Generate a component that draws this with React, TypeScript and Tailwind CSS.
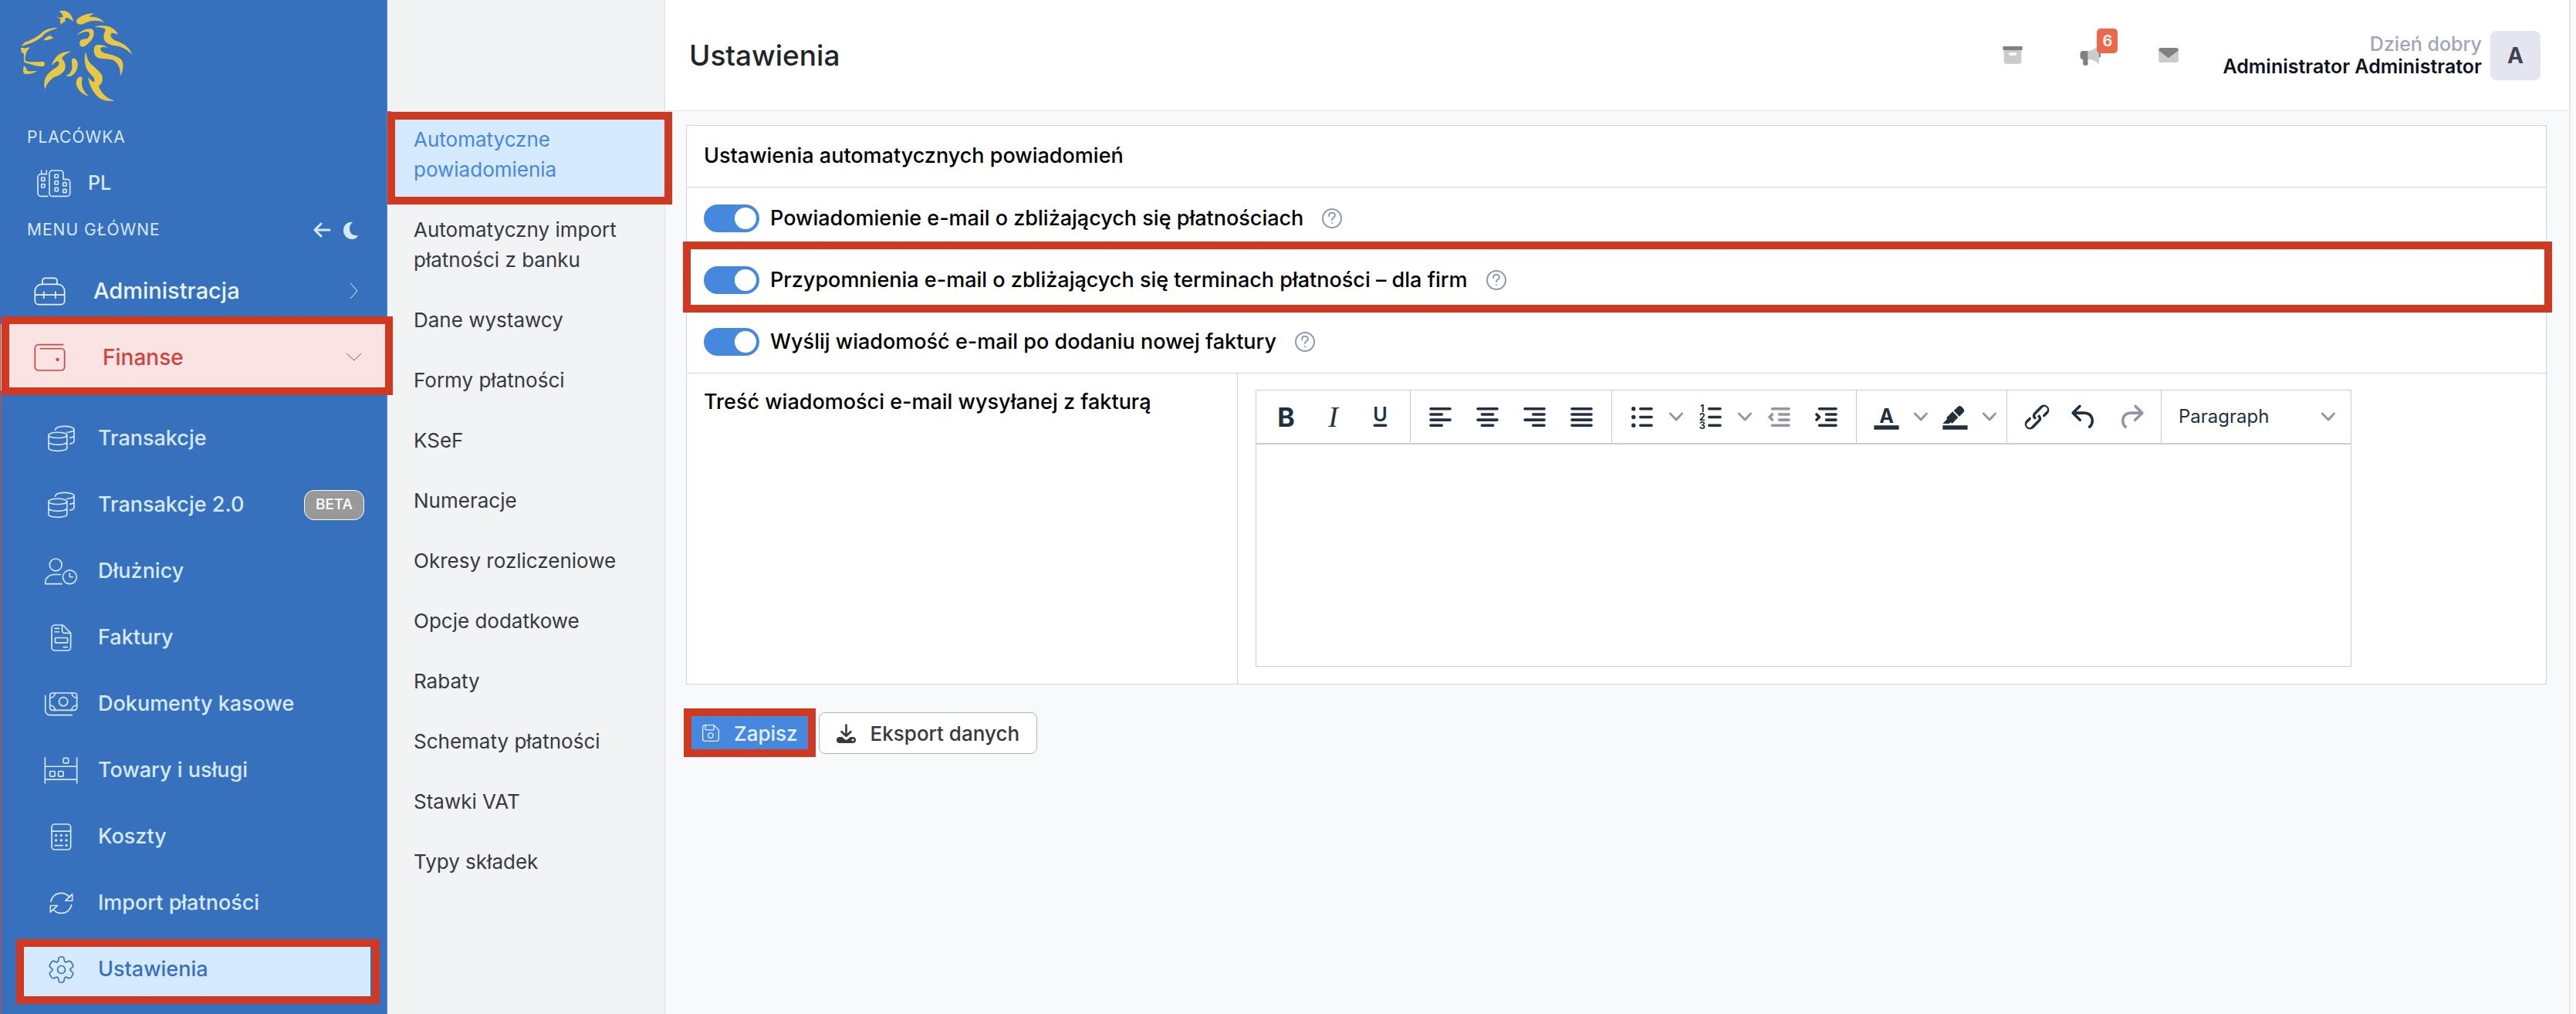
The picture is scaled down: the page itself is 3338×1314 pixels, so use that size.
import React from 'react';

type IconProps = { w: number; h: number; stroke?: number; children: React.ReactNode };

/* Outline icons are drawn on a grid three times finer than their display size. */
function Outline({ w, h, stroke = 5, children }: IconProps) {
  return (
    <svg
      width={Math.round(w / 3)}
      height={Math.round(h / 3)}
      viewBox={`0 0 ${w} ${h}`}
      fill="none"
      stroke="currentColor"
      strokeWidth={stroke}
      strokeLinecap="round"
      strokeLinejoin="round"
      aria-hidden="true"
      className="shrink-0"
    >
      {children}
    </svg>
  );
}

const Buildings = () => (
  <Outline w={132} h={108}>
    <path d="M42 103H15A12 12 0 0 1 3 91V29a12 12 0 0 1 12-12H37V3M17 3v14" />
    <rect x="17" y="30" width="13" height="13" rx="2" />
    <rect x="17" y="56" width="13" height="13" rx="2" />
    <path d="M102 37V14A11 11 0 0 0 91 3H59A11 11 0 0 0 48 14V92a11 11 0 0 0 11 11h58a11 11 0 0 0 11-11V48a11 11 0 0 0-11-11z" />
    <rect x="69" y="18" width="13" height="13" rx="2" />
    <rect x="69" y="44" width="13" height="13" rx="2" />
    <rect x="69" y="70" width="13" height="13" rx="2" />
    <rect x="101" y="50" width="13" height="13" rx="2" />
    <rect x="101" y="76" width="13" height="13" rx="2" />
  </Outline>
);

const Toolbox = () => (
  <Outline w={122} h={110}>
    <path d="M33 28V14A10 10 0 0 1 43 4h36a10 10 0 0 1 10 10V28" />
    <path d="M28 28h64a26 26 0 0 1 26 26V92a14 14 0 0 1-14 14H18A14 14 0 0 1 4 92V54A26 26 0 0 1 28 28zM4 69H118M38 57v24M83 57v24" />
  </Outline>
);

const Wallet = () => (
  <Outline w={122} h={110}>
    <path d="M112 5H18A14 14 0 0 0 4 19V91a13 13 0 0 0 13 13H105a13 13 0 0 0 13-13V33a13 13 0 0 0-13-13H25" />
    <circle cx="91" cy="62" r="4" fill="currentColor" />
  </Outline>
);

const Coins = () => (
  <Outline w={106} h={104}>
    <ellipse cx="39" cy="38" rx="36" ry="11" />
    <path d="M3 38v51c0 6 16 11 36 11s36-5 36-11V38M3 64c0 7 16 12 36 12s36-5 36-12" />
    <path d="M29 18C29 8 48 3 66 3s37 5 37 12-12 11-28 12M103 15v46c0 6-6 9-16 11M103 38c0 5-6 8-16 10" />
  </Outline>
);

const UserClock = () => (
  <Outline w={131} h={106}>
    <circle cx="45" cy="27" r="24" />
    <path d="M69 102H4C2 80 18 65 40 65h24" />
    <circle cx="100" cy="75" r="27" />
    <path d="M100 61v14h12" />
  </Outline>
);

const Invoice = () => (
  <Outline w={80} h={104}>
    <path d="M3 15A12 12 0 0 1 15 3h31l30 31v55a12 12 0 0 1-12 12H15A12 12 0 0 1 3 89z" />
    <path d="M43 4v20a10 10 0 0 0 10 10h22M15 16h16M15 29h16M48 88h15" />
    <rect x="16" y="52" width="48" height="19" rx="2" />
  </Outline>
);

const Banknotes = () => (
  <Outline w={131} h={94}>
    <rect x="22" y="3" width="106" height="68" rx="10" />
    <circle cx="75" cy="37" r="17" />
    <path d="M22 22c12 0 20-8 20-19M128 22c-12 0-20-8-20-19M22 52c12 0 20 8 20 19M128 52c-12 0-20 8-20 19M4 14v58a18 18 0 0 0 18 18h87" />
  </Outline>
);

const Shelf = () => (
  <Outline w={131} h={106}>
    <path d="M3 3v100M128 3v100M3 37h125M3 88h125" />
    <rect x="75" y="4" width="20" height="20" rx="4" />
    <rect x="22" y="56" width="20" height="20" rx="4" />
    <rect x="55" y="56" width="20" height="20" rx="4" />
  </Outline>
);

const Calculator = () => (
  <Outline w={80} h={104}>
    <rect x="3" y="3" width="73" height="98" rx="12" />
    <path d="M3 30h73M15 85h30" />
    <path strokeWidth="9" d="M19 46h1M39 46h1M59 46h1M19 65h1M39 65h1M59 65h1M59 85h1" />
  </Outline>
);

const Refresh = () => (
  <Outline w={94} h={86}>
    <path d="M6 36C9 17 26 3 46 3c14 0 26 7 34 17M90 7v26H63zM87 49C84 68 67 82 47 82 33 82 23 77 15 67M4 78V52h28z" />
  </Outline>
);

const Gear = () => (
  <Outline w={98} h={106}>
    <path d="M45 3H53Q58 3 59 8L61 18Q62 22 66 24L77 20Q84 18 88 24L94 34Q97 40 92 44L84 51V56L92 63Q97 67 94 72L88 83Q84 88 77 86L66 82Q62 84 61 88L59 98Q58 103 53 103H45Q40 103 39 98L37 88Q36 84 32 82L21 86Q14 88 10 83L4 72Q1 67 6 63L14 56V51L6 44Q1 40 4 34L10 24Q14 18 21 20L32 24Q36 22 37 18L39 8Q40 3 45 3Z" />
    <circle cx="49" cy="53" r="15" />
  </Outline>
);

const Lion = () => (
  <svg width="144" height="117" viewBox="81 42 432 351" fill="#e8c745" role="img" aria-label="Logo">
    <path d="M232 42H252C268 46 283 62 285 84 278 76 268 70 258 68L252 74 254 84 246 86 236 97C236 90 234 84 233 80 242 74 228 70 216 67 226 68 240 70 245 66 244 56 238 50 232 46Z" />
    <path d="M300 74C318 58 345 50 368 53 360 55 352 58 346 66 370 62 395 72 405 88 385 78 355 78 335 88 320 98 302 97 298 88 296 82 297 78 300 74Z" />
    <path d="M225 108C200 106 180 114 168 122 155 136 125 155 100 163 90 168 86 176 84 181 90 176 100 174 112 170 135 164 155 150 166 140 178 124 200 118 225 108Z" />
    <path d="M170 157C176 146 186 138 200 139 196 143 204 147 211 147 200 151 184 158 170 157Z" />
    <path d="M81 186H92C100 190 108 183 116 184 112 192 108 195 104 200 98 215 96 226 98 236 118 244 140 240 168 239 176 243 176 255 168 258 150 260 125 252 108 246 100 245 94 244 93 238 92 225 94 214 92 208 84 206 80 196 81 186Z" />
    <path d="M92 258C98 258 104 262 104 274 112 280 128 276 144 276 130 286 110 290 96 287 88 282 90 268 92 258Z" />
    <path d="M276 201C250 198 225 210 212 230 204 242 202 250 201 256 208 248 214 242 222 238 232 240 232 250 224 258 205 272 185 282 176 305 170 320 172 335 175 347 182 325 195 308 215 298 240 290 256 275 254 255 253 240 244 232 240 226 248 214 262 206 276 201Z" />
    <path d="M281 228C290 223 298 230 302 245 304 270 290 292 272 297 266 298 260 296 256 294 268 292 278 280 280 265 281 250 276 238 281 228Z" />
    <path d="M316 298C304 296 296 308 296 325 298 345 320 370 346 374 330 362 320 345 318 328 316 315 324 305 316 298Z" />
    <path d="M298 137C315 118 340 108 358 113 370 120 366 145 352 160 340 172 332 182 320 182 308 180 306 165 314 156 322 150 336 154 342 148 350 138 350 128 343 124 330 120 312 128 298 137Z" />
    <path d="M368 104C390 98 415 98 430 106 445 114 455 124 459 134 450 130 440 128 434 128 424 140 436 152 450 158 480 168 508 185 513 214 500 195 475 182 450 178 425 176 402 165 403 140 404 128 412 120 408 112 398 106 382 106 368 104Z" />
    <path d="M420 186C410 178 385 170 372 176 362 184 362 210 376 222 392 232 420 226 440 234 462 246 470 270 467 297 478 280 484 250 472 232 455 216 425 210 405 206 390 200 386 188 396 184 404 182 412 184 420 186Z" />
    <path d="M333 202C325 225 330 262 345 280 358 296 372 306 366 318 358 318 348 308 343 300 345 325 360 360 385 380 405 394 430 394 446 391 420 386 395 368 383 334 396 328 402 310 396 292 385 272 360 258 346 240 338 226 336 214 333 202Z" />
  </svg>
);

const Frame = ({ className }: { className: string }) => (
  <span aria-hidden="true" className={`pointer-events-none absolute border-10 border-[#d13820] ${className}`} />
);

const financeLinks: { label: string; icon: React.ReactNode; beta?: boolean; active?: boolean }[] = [
  { label: 'Transakcje', icon: <Coins /> },
  { label: 'Transakcje 2.0', icon: <Coins />, beta: true },
  { label: 'Dłużnicy', icon: <UserClock /> },
  { label: 'Faktury', icon: <Invoice /> },
  { label: 'Dokumenty kasowe', icon: <Banknotes /> },
  { label: 'Towary i usługi', icon: <Shelf /> },
  { label: 'Koszty', icon: <Calculator /> },
  { label: 'Import płatności', icon: <Refresh /> },
  { label: 'Ustawienia', icon: <Gear />, active: true },
];

function Sidebar() {
  return (
    <aside className="flex w-[502px] shrink-0 flex-col border-r border-[#4588de] bg-[#3770bd] text-[#d5e9ff]">
      <a href="#" className="mt-[14px] ml-[27px] w-36">
        <Lion />
      </a>
      <p className="mt-[35px] pl-[35px] text-[21px] leading-6 tracking-[1px]">PLACÓWKA</p>
      <button className="mt-[26px] flex h-11 items-center gap-[22px] pl-12 text-left text-[25px] font-medium">
        <Buildings />
        PL
      </button>
      <div className="mt-[26px] flex h-6 items-center pr-9 pl-[35px]">
        <p className="flex-1 text-[21px] leading-6 tracking-[1px]">MENU GŁÓWNE</p>
        <button aria-label="Zwiń menu" className="mr-4">
          <svg width="23" height="20" viewBox="0 0 23 20" fill="none" stroke="currentColor" strokeWidth="3" strokeLinecap="round" strokeLinejoin="round">
            <path d="M21 10H2M10 2L2 10l8 8" />
          </svg>
        </button>
        <button aria-label="Tryb ciemny">
          <svg width="20" height="23" viewBox="0 0 20 23" fill="currentColor">
            <path d="M12 1C6 0 0 4 0 12c0 6 5 11 11 11 4 0 7-2 8-5-6 1-11-2-11-9 0-3 1-6 4-8z" />
          </svg>
        </button>
      </div>
      <nav className="mt-6 flex flex-1 flex-col">
        <a href="#" className="flex h-[86px] items-center pr-[37px] pl-11 text-[29px] font-medium text-[#eaf4ff]">
          <Toolbox />
          <span className="ml-9 flex-1">Administracja</span>
          <svg width="11" height="22" viewBox="0 0 11 22" fill="none" stroke="currentColor" strokeWidth="1">
            <path d="M1 1l9 10-9 10" />
          </svg>
        </a>
        <div className="flex-1 border-l border-[#d8403a]">
          <a href="#" className="relative flex h-[86px] items-center bg-[#fae4e3] pr-8 pl-[43px] text-[28px] font-medium text-[#d2433c]">
            <Wallet />
            <span className="ml-12 flex-1">Finanse</span>
            <svg width="21" height="12" viewBox="0 0 21 12" fill="none" stroke="currentColor" strokeWidth="1">
              <path d="M1 1l10 9 9-9" />
            </svg>
            <Frame className="-top-[10px] -right-2 -bottom-[6px] left-px z-10" />
          </a>
          <ul className="mt-[19px] mb-[15px]">
            {financeLinks.map(({ label, icon, beta, active }) => (
              <li key={label} className="relative">
                {active && (
                  <>
                    <span className="absolute top-[10px] right-[21px] bottom-2 left-[30px] bg-[#d5e9ff]" />
                    <Frame className="top-1 right-[9px] -bottom-[2px] left-5" />
                  </>
                )}
                <a href="#" className={`relative flex h-[86px] items-center pr-[29px] text-[27px] font-medium ${active ? 'text-[#3770bd]' : ''}`}>
                  <span className="ml-14 flex w-11 justify-center">{icon}</span>
                  <span className="ml-[26px] flex-1">{label}</span>
                  {beta && (
                    <span className="flex h-[39px] w-[78px] items-center justify-center rounded-[13px] border border-white bg-[#999] text-[19px] text-white">
                      BETA
                    </span>
                  )}
                </a>
              </li>
            ))}
          </ul>
        </div>
      </nav>
    </aside>
  );
}

const sections = [
  'Automatyczne powiadomienia',
  'Automatyczny import płatności z banku',
  'Dane wystawcy',
  'Formy płatności',
  'KSeF',
  'Numeracje',
  'Okresy rozliczeniowe',
  'Opcje dodatkowe',
  'Rabaty',
  'Schematy płatności',
  'Stawki VAT',
  'Typy składek',
];

function SectionMenu() {
  return (
    <nav className="w-[360px] shrink-0 border-r border-[#dee2e6] bg-[#f1f3f5] pt-36">
      {sections.map((label, i) => (
        <a
          key={label}
          href="#"
          className={`relative block border-l-5 pt-[17px] pr-9 pb-[22px] pl-[29px] text-[26px] leading-[39px] ${
            i === 0 ? 'border-[#4588de] bg-[#d5e9ff] text-[#4588de]' : 'border-transparent text-[#343a40]'
          }`}
        >
          {label}
          {i === 0 && <Frame className="top-px -right-[10px] -bottom-1 -left-[5px]" />}
        </a>
      ))}
    </nav>
  );
}

function Header() {
  return (
    <header className="flex h-36 items-center border-b border-[#e5e8eb] bg-white pr-[37px] pl-[31px]">
      <h1 className="flex-1 text-[37px] font-medium text-[#212529]">Ustawienia</h1>
      <button aria-label="Archiwum" className="flex w-[101px] justify-center">
        <svg width="26" height="23" viewBox="50 117 76 69">
          <path d="M54 130h68v47a8 8 0 0 1-8 8H62a8 8 0 0 1-8-8z" fill="#cbcbcb" />
          <rect x="50" y="117" width="76" height="15" rx="4" fill="#808080" />
          <rect x="73" y="142" width="30" height="10" rx="3" fill="#fff" />
        </svg>
      </button>
      <button aria-label="Ogłoszenia" className="relative flex w-[101px] justify-center">
        <svg width="27" height="26" viewBox="350 112 80 78">
          <path d="M423 141a8 8 0 0 1 0 16z" fill="#808080" stroke="#808080" strokeWidth="4" />
          <path d="M362 133h20v33h-1v18a5 5 0 0 1-5 5h-9a5 5 0 0 1-5-5v-18a11 11 0 0 1-11-11v-11a11 11 0 0 1 11-11z" fill="#808080" />
          <path d="M381 133C400 132 412 120 424 112V185C412 172 398 165 381 165Z" fill="#cbcbcb" />
        </svg>
        <span className="absolute -top-[22px] left-[59px] flex h-8 w-[27px] items-center justify-center rounded-[5px] bg-[#e9694a] text-xl font-semibold text-white">
          6
        </span>
      </button>
      <button aria-label="Wiadomości" className="flex w-[101px] justify-center">
        <svg width="26" height="19" viewBox="654 123 77 57">
          <rect x="654" y="123" width="77" height="57" rx="8" fill="#cbcbcb" />
          <path d="M654 133a10 10 0 0 1 9-10h59a10 10 0 0 1 9 10L696 160q-4 3-8 0z" fill="#808080" />
        </svg>
      </button>
      <div className="ml-5 text-right text-[25px] leading-[29px]">
        <p className="font-medium text-[#a1a5b7]">Dzień dobry</p>
        <p className="font-semibold text-[#0f1220]">Administrator Administrator</p>
      </div>
      <button className="ml-[11px] flex h-16 w-[65px] items-center justify-center rounded-lg bg-[#e5e5ef] text-[28px] font-bold text-[#3f4254]">
        A
      </button>
    </header>
  );
}

const toggles = [
  { id: 'upcoming', label: 'Powiadomienie e-mail o zbliżających się płatnościach' },
  { id: 'companies', label: 'Przypomnienia e-mail o zbliżających się terminach płatności – dla firm', framed: true },
  { id: 'invoice', label: 'Wyślij wiadomość e-mail po dodaniu nowej faktury' },
];

const Help = () => (
  <button aria-label="Pomoc" className="ml-6 text-[#8d9bab]">
    <svg width="26" height="26" viewBox="0 0 26 26" fill="none" stroke="currentColor" strokeWidth="2" strokeLinecap="round">
      <circle cx="13" cy="13" r="12" />
      <path d="M9 10c0-6 8-5 8-1 0 3-4 3-4 6" />
      <circle cx="13" cy="19" r="1" fill="currentColor" stroke="none" />
    </svg>
  </button>
);

function Tool({ label, muted, children }: { label: string; muted?: boolean; children: React.ReactNode }) {
  return (
    <button aria-label={label} className={`flex h-[61px] w-[61px] items-center justify-center ${muted ? 'text-[#9196a1]' : ''}`}>
      <svg width="43" height="43" viewBox="0 0 24 24" fill="currentColor" fontFamily="Inter, sans-serif">
        {children}
      </svg>
    </button>
  );
}

const Chevron = () => (
  <svg width="18" height="18" viewBox="0 0 10 10" fill="#9196a1" aria-hidden="true">
    <path d="M8.7 2.2c.3-.3.8-.3 1 0 .4.4.4.9 0 1.2L5.7 7.8c-.3.3-.9.3-1.2 0L.2 3.4a.8.8 0 0 1 0-1.2c.3-.3.8-.3 1.1 0L5 6l3.7-3.8Z" />
  </svg>
);

const More = () => (
  <button aria-label="Więcej opcji" className="flex h-[61px] w-7 items-center justify-center">
    <Chevron />
  </button>
);

const Lines = ({ d }: { d: string }) => (
  <path d={d} fill="none" stroke="currentColor" strokeWidth="2" strokeLinecap="round" strokeLinejoin="round" />
);

const Group = ({ children }: { children: React.ReactNode }) => (
  <div className="flex items-center border-r border-[#ccc] px-2">{children}</div>
);

const undoPath =
  'M6.4 8H12c3.7 0 6.2 2 6.8 5.1.6 2.7-.4 5.6-2.3 6.8a1 1 0 0 1-1-1.8c1.1-.6 1.8-2.7 1.4-4.6-.5-2.1-2.1-3.5-4.9-3.5H6.4l3.3 3.3a1 1 0 1 1-1.4 1.4l-5-5a1 1 0 0 1 0-1.4l5-5a1 1 0 0 1 1.4 1.4L6.4 8Z';

function Editor() {
  return (
    <div className="w-full max-w-[1420px] border border-[#ccc] text-[#222f3e]">
      <div className="flex h-[70px] border-b-2 border-[#ccc]">
        <Group>
          <Tool label="Pogrubienie">
            <text x="12" y="19" fontSize="19" fontWeight="700" textAnchor="middle">B</text>
          </Tool>
          <Tool label="Kursywa">
            <text x="12" y="19" fontSize="21" fontStyle="italic" fontFamily="'Liberation Serif', serif" textAnchor="middle">I</text>
          </Tool>
          <Tool label="Podkreślenie">
            <text x="12" y="15" fontSize="14" fontWeight="600" textAnchor="middle">U</text>
            <Lines d="M8 18h8" />
          </Tool>
        </Group>
        <Group>
          <Tool label="Wyrównaj do lewej"><Lines d="M5 6h14M5 10h8M5 14h14M5 18h8" /></Tool>
          <Tool label="Wyśrodkuj"><Lines d="M5 6h14M8 10h8M5 14h14M8 18h8" /></Tool>
          <Tool label="Wyrównaj do prawej"><Lines d="M5 6h14M11 10h8M5 14h14M11 18h8" /></Tool>
          <Tool label="Wyjustuj"><Lines d="M5 6h14M5 10h14M5 14h14M5 18h14" /></Tool>
        </Group>
        <Group>
          <Tool label="Lista punktowana">
            <Lines d="M11 6h8M11 12h8M11 18h8" />
            <circle cx="6" cy="6" r="1.5" /><circle cx="6" cy="12" r="1.5" /><circle cx="6" cy="18" r="1.5" />
          </Tool>
          <More />
          <Tool label="Lista numerowana">
            <Lines d="M11 6h8M11 12h8M11 18h8" />
            <text x="6" y="8.500" fontSize="7" fontWeight="700" textAnchor="middle">1</text>
            <text x="6" y="14.500" fontSize="7" fontWeight="700" textAnchor="middle">2</text>
            <text x="6" y="20.500" fontSize="7" fontWeight="700" textAnchor="middle">3</text>
          </Tool>
          <More />
          <Tool label="Zmniejsz wcięcie" muted><Lines d="M7 6h12M12 10h7M12 14h7M7 18h12M7 10l-2 2 2 2" /></Tool>
          <Tool label="Zwiększ wcięcie"><Lines d="M7 6h12M12 10h7M12 14h7M7 18h12M5 10l2 2-2 2" /></Tool>
        </Group>
        <Group>
          <Tool label="Kolor tekstu">
            <path d="M3 18h18v3H3z" />
            <text x="12" y="16" fontSize="14" fontWeight="700" textAnchor="middle">A</text>
          </Tool>
          <More />
          <Tool label="Kolor tła">
            <path d="M3 18h18v3H3z" />
            <path d="M7.7 16.700H3l3.300-3.300-.7-.8L10.200 8l4 4.100-4 4.200c-.2.2-.6.2-.8 0l-.6-.7-1.100 1.100zm5-7.500L11 7.400l3-2.900a2 2 0 0 1 2.600 0L18 6c.7.7.7 2 0 2.700l-2.900 2.900-1.800-1.800-.5-.6" />
          </Tool>
          <More />
        </Group>
        <Group>
          <Tool label="Odnośnik">
            <path d="M6.2 12.3a1 1 0 0 1 1.4 1.4l-2 2a2 2 0 1 0 2.6 2.8l4.8-4.8a1 1 0 0 0 0-1.4 1 1 0 1 1 1.4-1.3 2.9 2.9 0 0 1 0 4L9.6 20a3.9 3.9 0 0 1-5.5-5.5l2-2Zm11.6-.6a1 1 0 0 1-1.4-1.4l2-2a2 2 0 1 0-2.6-2.8L11 10.3a1 1 0 0 0 0 1.4A1 1 0 1 1 9.6 13a2.9 2.9 0 0 1 0-4L14.4 4a3.9 3.9 0 0 1 5.5 5.5l-2 2Z" />
          </Tool>
          <Tool label="Cofnij"><path d={undoPath} /></Tool>
          <Tool label="Ponów" muted><path transform="matrix(-1 0 0 1 24 0)" d={undoPath} /></Tool>
        </Group>
        <div className="relative flex-1">
          <select aria-label="Format akapitu" className="h-full w-full appearance-none bg-transparent pl-[22px] text-2xl">
            <option>Paragraph</option>
          </select>
          <span className="pointer-events-none absolute inset-y-0 right-5 flex items-center">
            <Chevron />
          </span>
        </div>
      </div>
      <textarea aria-label="Treść wiadomości e-mail wysyłanej z fakturą" className="block h-[287px] w-full resize-none bg-white p-5 text-2xl outline-none" />
    </div>
  );
}

export default function App() {
  return (
    <div className="flex min-h-screen bg-[#f8f9fb] font-['Inter',sans-serif]">
      <Sidebar />
      <SectionMenu />
      <main className="min-w-0 flex-1">
        <Header />
        <form className="pt-[18px] pr-[29px] pl-[27px]" onSubmit={(e) => e.preventDefault()}>
          <section className="border border-[#ced4da] bg-white text-[27px] font-medium text-black">
            <h2 className="flex h-20 items-center border-b border-[#ced4da] px-[22px]">Ustawienia automatycznych powiadomień</h2>
            {toggles.map(({ id, label, framed }) => (
              <div key={id} className="relative flex h-20 items-center px-[22px]">
                <input
                  id={id}
                  type="checkbox"
                  defaultChecked
                  className="flex h-9 w-[72px] appearance-none items-center rounded-full bg-slate-300 px-1 before:h-7 before:w-7 before:rounded-full before:bg-white checked:justify-end checked:bg-[#4588de]"
                />
                <label htmlFor={id} className="ml-[14px]">{label}</label>
                <Help />
                {framed && <Frame className="-top-[10px] -right-2 -bottom-[2px] -left-[5px]" />}
              </div>
            ))}
            <div className="grid grid-cols-[714px_1fr] border-t border-[#ced4da]">
              <p className="border-r border-[#ced4da] pt-[17px] pl-[22px] leading-10">Treść wiadomości e-mail wysyłanej z fakturą</p>
              <div className="pt-[21px] pr-[22px] pb-[22px] pl-[23px] font-normal">
                <Editor />
              </div>
            </div>
          </section>
          <div className="mt-9 flex gap-[6px] text-[26px] font-medium">
            <button className="relative flex h-[54px] items-center gap-[19px] rounded-lg bg-[#4588de] px-[21px] text-[#e6f1ff]">
              <Outline w={67} h={67} stroke={4}>
                <path d="M2 12A10 10 0 0 1 12 2h34l19 19v34a10 10 0 0 1-10 10H12A10 10 0 0 1 2 55zM12 3v14a4 4 0 0 0 4 4h26a4 4 0 0 0 4-4V3" />
                <circle cx="33" cy="43" r="10" />
              </Outline>
              Zapisz
              <Frame className="-top-[5px] -right-[2px] -bottom-1 -left-[3px]" />
            </button>
            <button className="flex h-[54px] items-center gap-[19px] rounded-lg border border-[#adb5bd] bg-white px-[22px] text-[#343a40]">
              <svg width="25" height="25" viewBox="0 0 76 76" fill="currentColor" aria-hidden="true">
                <path d="M38 5v42M20 31l18 17 18-17" fill="none" stroke="currentColor" strokeWidth="8" strokeLinecap="round" strokeLinejoin="round" />
                <path d="M12 52h10l10 9q6 4 12 0l10-9h10a12 12 0 0 1 0 24H12a12 12 0 0 1 0-24z" />
                <rect x="60" y="60" width="8" height="8" rx="2" fill="#fff" />
              </svg>
              Eksport danych
            </button>
          </div>
        </form>
      </main>
      <div className="w-[9px] shrink-0 border-l-2 border-[#e6e6e6] bg-[#fafafa]" />
    </div>
  );
}
